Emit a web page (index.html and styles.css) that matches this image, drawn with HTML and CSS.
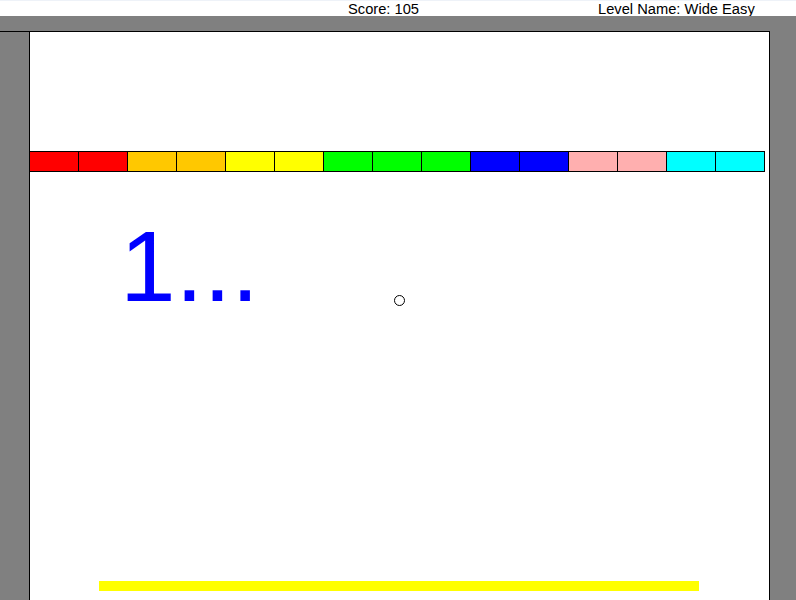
FILE: index.html
```html
<!DOCTYPE html>
<html>
<head>
<meta charset="utf-8">
<link rel="stylesheet" href="styles.css">
</head>
<body>
<div class="window">
  <div class="hud">
    <span class="score">Score: 105</span>
    <span class="level">Level Name: Wide Easy</span>
  </div>
  <div class="band"></div>
  <div class="field">
    <div class="side side-left"></div>
    <div class="arena">
      <div class="bricks">
        <div class="brick red"></div>
        <div class="brick red"></div>
        <div class="brick orange"></div>
        <div class="brick orange"></div>
        <div class="brick yellow"></div>
        <div class="brick yellow"></div>
        <div class="brick green"></div>
        <div class="brick green"></div>
        <div class="brick green"></div>
        <div class="brick blue"></div>
        <div class="brick blue"></div>
        <div class="brick pink"></div>
        <div class="brick pink"></div>
        <div class="brick cyan"></div>
        <div class="brick cyan last"></div>
      </div>
      <div class="countdown">1...</div>
      <svg class="ball" width="12" height="12" viewBox="0 0 12 12"><circle cx="5.5" cy="5.5" r="5" fill="none" stroke="#000" stroke-width="1"/></svg>
      <div class="paddle"></div>
    </div>
    <div class="side side-right"></div>
  </div>
</div>
</body>
</html>
```
FILE: styles.css
```css
html, body {
  margin: 0;
  padding: 0;
  background: #808080;
}
.window {
  width: 796px;
  height: 600px;
  overflow: hidden;
  display: flex;
  flex-direction: column;
}
.hud {
  height: 14px;
  padding-top: 1px;
  border-top: 1px solid #eef2f8;
  background: #ffffff;
  display: flex;
  padding-left: 348px;
  font-family: "Liberation Sans", Arial, sans-serif;
  font-size: 14.7px;
  line-height: 15px;
  color: #000;
  white-space: nowrap;
}
.score {
  width: 250px;
}
.band {
  height: 15px;
  background: #808080;
}
.field {
  flex: 1;
  display: flex;
}
.side {
  background: #808080;
}
.side-left {
  width: 29px;
  border-top: 1px solid #000;
}
.side-right {
  flex: 1;
}
.arena {
  position: relative;
  width: 739px;
  border: 1px solid #000;
  border-bottom: none;
  background: #ffffff;
}
.bricks {
  display: flex;
  margin-top: 119px;
  margin-left: -1px;
}
.brick {
  width: 48px;
  height: 19px;
  border-top: 1px solid #000;
  border-bottom: 1px solid #000;
  border-left: 1px solid #000;
}
.brick.last {
  border-right: 1px solid #000;
}
.red { background: #ff0000; }
.orange { background: #ffc800; }
.yellow { background: #ffff00; }
.green { background: #00ff00; }
.blue { background: #0000ff; }
.pink { background: #ffafaf; }
.cyan { background: #00ffff; }
.countdown {
  position: absolute;
  left: 90px;
  top: 184px;
  font-family: "Liberation Sans", Arial, sans-serif;
  font-size: 100px;
  line-height: 100px;
  color: #0000ff;
  white-space: nowrap;
}
.ball {
  position: absolute;
  left: 364px;
  top: 263px;
  display: block;
}
.paddle {
  position: absolute;
  left: 69px;
  top: 549px;
  width: 600px;
  height: 10px;
  background: #ffff00;
}
```
